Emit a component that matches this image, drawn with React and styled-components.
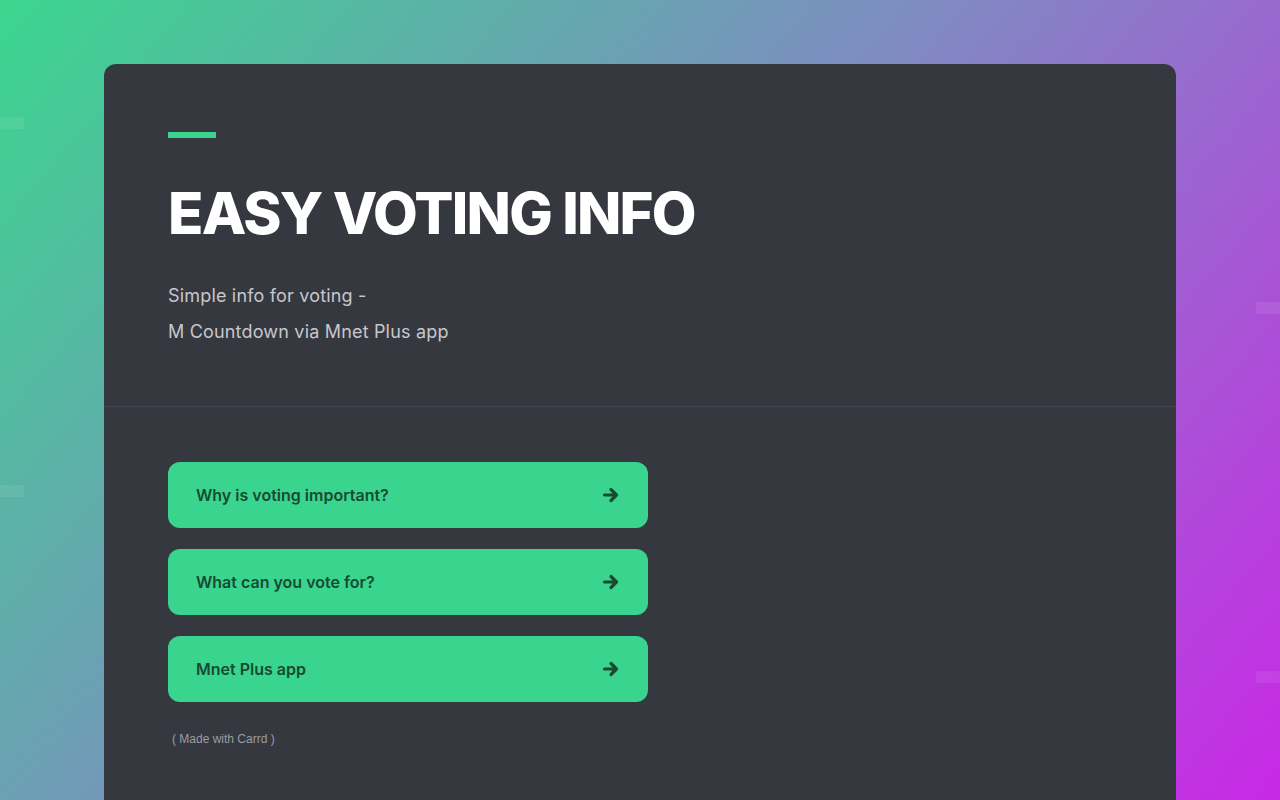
import React from "react";
import styled, { createGlobalStyle } from "styled-components";

const GlobalStyle = createGlobalStyle`
  html, body {
    margin: 0;
    padding: 0;
    height: 100%;
  }
  body {
    font-family: Inter, "Noto Sans", sans-serif;
    background: #7f8bc2;
    overflow: hidden;
  }
`;

// faint squares scattered along the edges are painted as extra background layers
const speck = "linear-gradient(rgba(255,255,255,0.07), rgba(255,255,255,0.07))";

const Page = styled.div`
  min-height: 800px;
  padding: 64px 104px 0;
  box-sizing: border-box;
  background:
    ${speck} no-repeat 0 117px / 24px 12px,
    ${speck} no-repeat 0 485px / 24px 12px,
    ${speck} no-repeat right 0 top 302px / 24px 12px,
    ${speck} no-repeat right 0 top 671px / 24px 12px,
    linear-gradient(130deg, #3bd68e 0%, #7f8bc2 48%, #c928e6 100%);
`;

const Card = styled.main`
  background: #363840;
  border-radius: 12px 12px 0 0;
  min-height: 736px;
`;

const Header = styled.section`
  padding: 68px 64px 56px;
  border-bottom: 1px solid #42444d;
`;

const Accent = styled.div`
  width: 48px;
  height: 6px;
  background: #39d58f;
  margin-bottom: 46px;
`;

const Title = styled.h1`
  margin: 0 0 36px;
  font-size: 58px;
  line-height: 1;
  font-weight: 800;
  letter-spacing: -0.03em;
  color: #ffffff;
`;

const Subtitle = styled.p`
  margin: 0;
  font-size: 18px;
  line-height: 36px;
  letter-spacing: 0.01em;
  color: #c6c7cd;
`;

const Body = styled.section`
  padding: 55px 64px 40px;
  display: flex;
  flex-direction: column;
  align-items: flex-start;
`;

const Links = styled.nav`
  display: flex;
  flex-direction: column;
  gap: 21px;
`;

const LinkButton = styled.a`
  display: flex;
  align-items: center;
  justify-content: space-between;
  box-sizing: border-box;
  width: 480px;
  height: 66px;
  padding: 0 28px;
  border-radius: 12px;
  background: #39d58f;
  color: #174a31;
  font-size: 16px;
  font-weight: 600;
  text-decoration: none;
  cursor: pointer;
`;

const Footer = styled.div`
  margin-top: 30px;
  padding-left: 4px;
  font-family: "Liberation Sans", Arial, sans-serif;
  font-size: 12px;
  color: #9b9ca4;
`;

function Arrow() {
  return (
    <svg width="18" height="18" viewBox="0 0 18 18" fill="none">
      <path
        d="M2.5 9h11M9 3.5 14.5 9 9 14.5"
        stroke="#174a31"
        strokeWidth="3.2"
        strokeLinecap="round"
        strokeLinejoin="round"
      />
    </svg>
  );
}

const links = ["Why is voting important?", "What can you vote for?", "Mnet Plus app"];

export default function App() {
  return (
    <Page>
      <GlobalStyle />
      <Card>
        <Header>
          <Accent />
          <Title>EASY VOTING INFO</Title>
          <Subtitle>
            Simple info for voting -
            <br />
            M Countdown via Mnet Plus app
          </Subtitle>
        </Header>
        <Body>
          <Links>
            {links.map((label) => (
              <LinkButton key={label}>
                {label}
                <Arrow />
              </LinkButton>
            ))}
          </Links>
          <Footer>( Made with Carrd )</Footer>
        </Body>
      </Card>
    </Page>
  );
}
